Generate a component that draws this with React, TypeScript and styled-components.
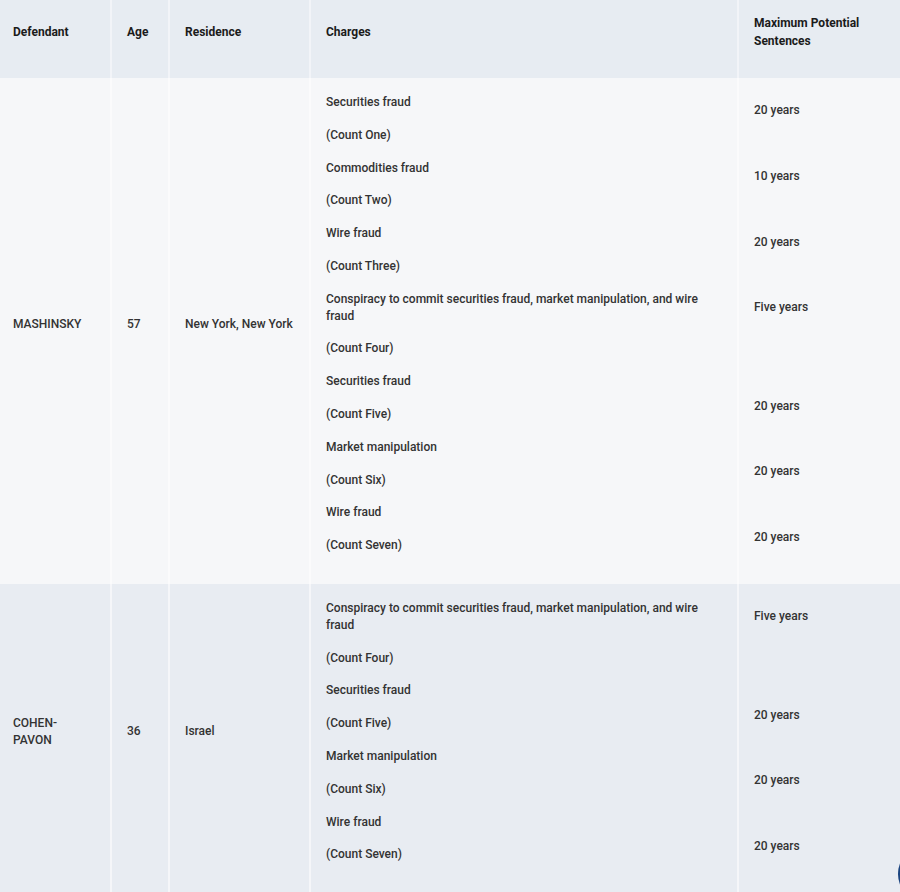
import React from "react";
import styled, { createGlobalStyle } from "styled-components";

const GlobalStyle = createGlobalStyle`
  html, body {
    margin: 0;
    padding: 0;
    background: #f6f7f9;
  }
  body {
    font-family: Roboto, "Noto Sans", "Liberation Sans", Arial, sans-serif;
    overflow: hidden;
  }
`;

const Page = styled.div`
  width: 900px;
  height: 892px;
  overflow: hidden;
  position: relative;
`;

const Table = styled.table`
  width: 900px;
  border-collapse: collapse;
  table-layout: fixed;
`;

const HeadRow = styled.tr`
  background: #e7ecf2;
`;

const BodyRow = styled.tr<{ $shade: boolean }>`
  background: ${(p) => (p.$shade ? "#e8ecf2" : "#f6f7f9")};
`;

const HeadCell = styled.th`
  padding: 14px 15px 12px;
  text-align: left;
  vertical-align: middle;
  font-size: 12px;
  line-height: 18px;
  font-weight: 700;
  color: #1b1b1b;
  border-right: 2px solid rgba(255, 255, 255, 0.45);
  &:first-child {
    padding-left: 13px;
  }
  &:last-child {
    border-right: none;
  }
`;

const Cell = styled.td`
  padding: 16px 15px 14px;
  text-align: left;
  vertical-align: middle;
  font-size: 12px;
  line-height: 1.4;
  font-weight: 500;
  color: #333333;
  border-right: 2px solid rgba(255, 255, 255, 0.55);
  &:first-child {
    padding-left: 13px;
  }
  &:last-child {
    border-right: none;
  }
`;

const Para = styled.p`
  margin: 0 0 16px;
`;

const HeadPara = styled.p`
  margin: 0 0 16px;
`;

const ChatBubble = styled.div`
  position: absolute;
  left: 898px;
  top: 844px;
  width: 60px;
  height: 60px;
  border-radius: 50%;
  background: #1a4480;
`;

const B = "\u00a0";

type Defendant = {
  name: string;
  age: string;
  residence: string;
  charges: string[];
  sentences: string[];
};

const tail = [
  "Conspiracy to commit securities fraud, market manipulation, and wire fraud",
  "(Count Four)",
  "Securities fraud",
  "(Count Five)",
  "Market manipulation",
  "(Count Six)",
  "Wire fraud",
  "(Count Seven)",
];

const defendants: Defendant[] = [
  {
    name: "MASHINSKY",
    age: "57",
    residence: "New York, New York",
    charges: [
      "Securities fraud",
      "(Count One)",
      "Commodities fraud",
      "(Count Two)",
      "Wire fraud",
      "(Count Three)",
      ...tail,
    ],
    sentences: [
      "20 years",
      B,
      "10 years",
      B,
      "20 years",
      B,
      "Five years",
      B,
      B,
      "20 years",
      B,
      "20 years",
      B,
      "20 years",
    ],
  },
  {
    name: "COHEN-PAVON",
    age: "36",
    residence: "Israel",
    charges: tail,
    sentences: ["Five years", B, B, "20 years", B, "20 years", B, "20 years"],
  },
];

const widths = [111, 58, 141, 428, 162];

export default function App() {
  return (
    <Page>
      <GlobalStyle />
      <Table>
        <colgroup>
          {widths.map((w, i) => (
            <col key={i} style={{ width: w }} />
          ))}
        </colgroup>
        <thead>
          <HeadRow>
            <HeadCell><HeadPara>Defendant</HeadPara></HeadCell>
            <HeadCell><HeadPara>Age</HeadPara></HeadCell>
            <HeadCell><HeadPara>Residence</HeadPara></HeadCell>
            <HeadCell><HeadPara>Charges</HeadPara></HeadCell>
            <HeadCell><HeadPara>Maximum Potential Sentences</HeadPara></HeadCell>
          </HeadRow>
        </thead>
        <tbody>
          {defendants.map((d, i) => (
            <BodyRow key={d.name} $shade={i % 2 === 1}>
              <Cell><Para>{d.name}</Para></Cell>
              <Cell><Para>{d.age}</Para></Cell>
              <Cell><Para>{d.residence}</Para></Cell>
              <Cell>
                {d.charges.map((c, j) => (
                  <Para key={j}>{c}</Para>
                ))}
              </Cell>
              <Cell>
                {d.sentences.map((s, j) => (
                  <Para key={j}>{s}</Para>
                ))}
              </Cell>
            </BodyRow>
          ))}
        </tbody>
      </Table>
      <ChatBubble />
    </Page>
  );
}
